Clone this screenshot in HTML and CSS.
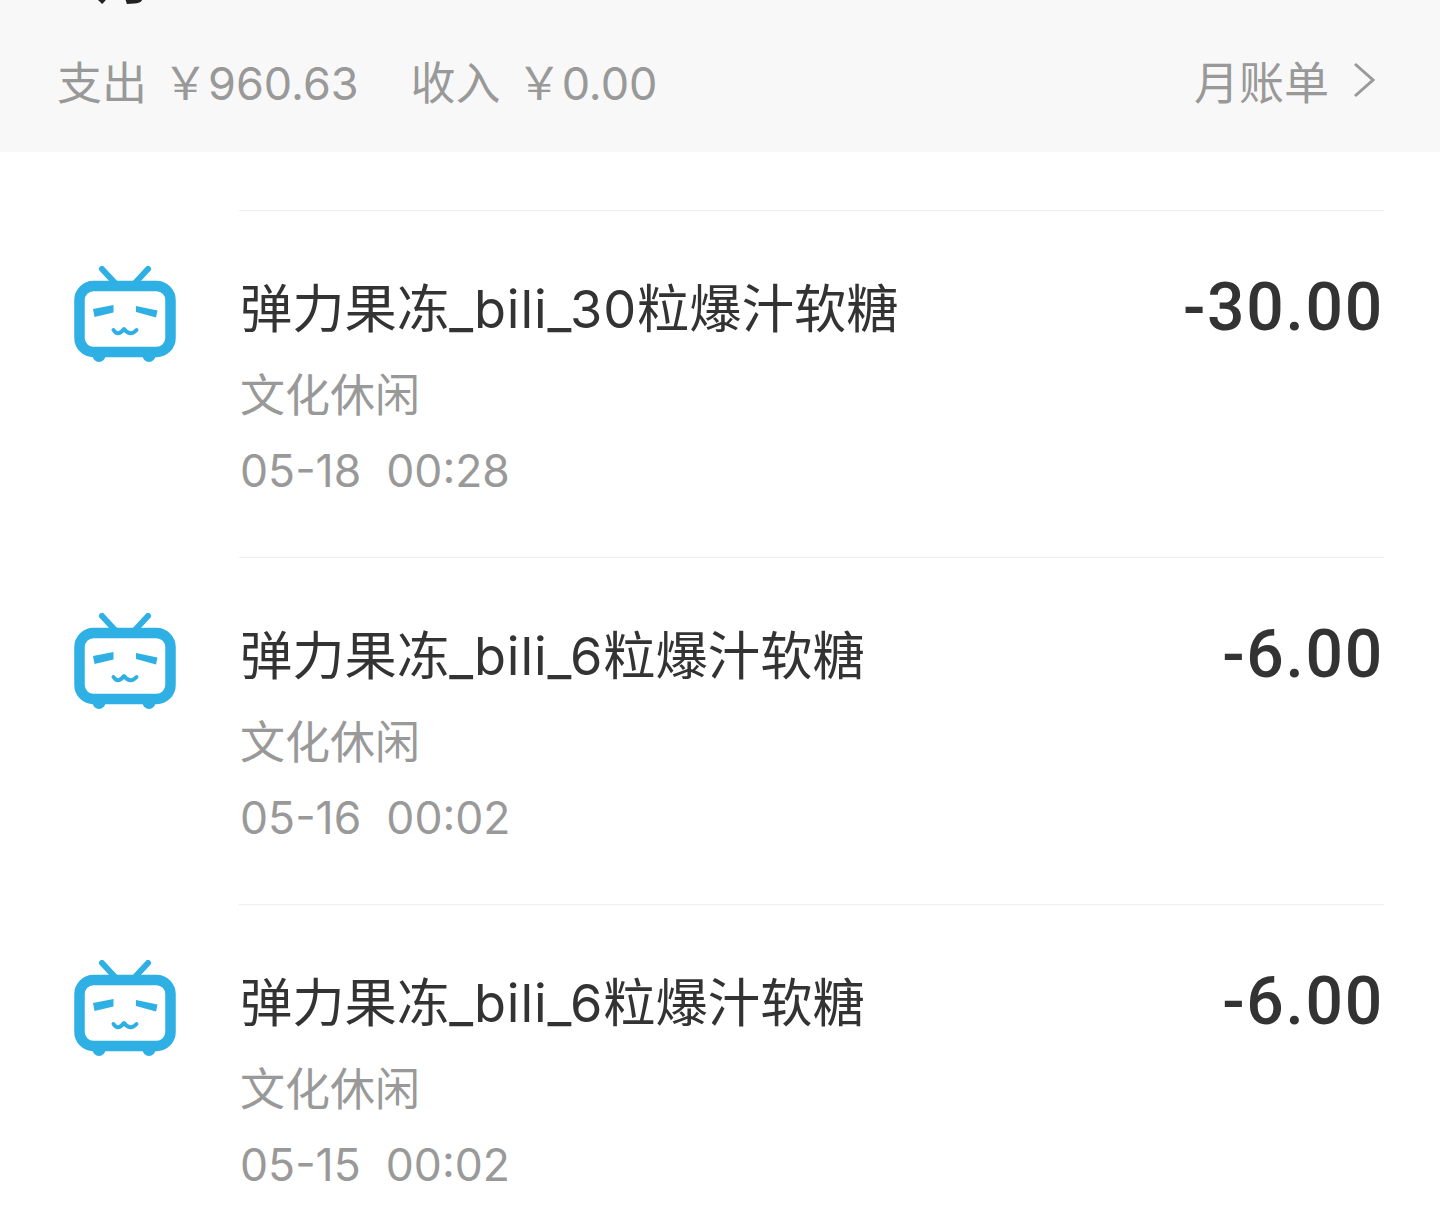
FILE: index.html
```html
<!DOCTYPE html>
<html lang="zh-CN">
<head>
<meta charset="UTF-8" />
<title>账单</title>
<link rel="stylesheet" href="styles.css">
</head>
<body>

<svg class="defs" width="0" height="0">
  <symbol id="tv" viewBox="0 0 102 96">
    <g fill="none" stroke="#2fb0e4" stroke-linecap="round" stroke-linejoin="round">
      <path d="M28 3 L41 17 M74 3 L61 17" stroke-width="6" />
      <rect x="5.5" y="20" width="91" height="66" rx="14" stroke-width="10.5" />
      <path d="M39.5 64 Q44 71 50 63 Q56 71 62.5 64" stroke-width="4" />
    </g>
    <path d="M19 43 L39.5 39 L39.5 46.5 L20.5 51 Z M62 40 L83.5 44.5 L82 51.5 L62 46 Z" fill="#2fb0e4" />
    <circle cx="25" cy="89.5" r="6.5" fill="#2fb0e4" />
    <circle cx="75" cy="89.5" r="6.5" fill="#2fb0e4" />
  </symbol>
</svg>

<header class="summary">
  <div class="month">5月</div>
  <div class="summary-row">
    <div class="totals">
      <span>支出</span><span class="money">￥960.63</span>
      <span class="income">收入</span><span class="money">￥0.00</span>
    </div>
    <a class="bill-link" href="#">月账单
      <svg class="chevron" viewBox="0 0 22 36" width="22" height="36"><path d="M2 2 L20 18 L2 34" fill="none" stroke="#999" stroke-width="3" /></svg>
    </a>
  </div>
</header>

<main class="list">
  <div class="row">
    <svg class="tv"><use href="#tv" /></svg>
    <div class="row-body">
      <div class="info">
        <div class="title">弹力果冻<span class="latin">_bili_30</span>粒爆汁软糖</div>
        <div class="category">文化休闲</div>
        <div class="time">05-18&nbsp; 00:28</div>
      </div>
      <div class="amount">-30.00</div>
    </div>
  </div>
  <div class="row">
    <svg class="tv"><use href="#tv" /></svg>
    <div class="row-body">
      <div class="info">
        <div class="title">弹力果冻<span class="latin">_bili_6</span>粒爆汁软糖</div>
        <div class="category">文化休闲</div>
        <div class="time">05-16&nbsp; 00:02</div>
      </div>
      <div class="amount">-6.00</div>
    </div>
  </div>
  <div class="row">
    <svg class="tv"><use href="#tv" /></svg>
    <div class="row-body">
      <div class="info">
        <div class="title">弹力果冻<span class="latin">_bili_6</span>粒爆汁软糖</div>
        <div class="category">文化休闲</div>
        <div class="time">05-15&nbsp; 00:02</div>
      </div>
      <div class="amount">-6.00</div>
    </div>
  </div>
</main>

</body>
</html>
```

FILE: styles.css
```css
html, body {
  margin: 0;
  height: 100%;
  overflow: hidden;
  background: #fff;
}
body {
  font-family: "Inter", "Noto Sans CJK SC", sans-serif;
  color: #333;
}
.defs {
  display: block;
  height: 0;
}
.summary {
  height: 152px;
  background: #f8f8f8;
  padding: 0 65px 0 57px;
  box-sizing: border-box;
  overflow: hidden;
}
.month {
  height: 56px;
  margin-top: -50px;
  padding-left: 3px;
  line-height: 56px;
  font-size: 56px;
  font-weight: 700;
  color: #222;
}
.summary-row {
  display: flex;
  justify-content: space-between;
  align-items: center;
  height: 56px;
  margin-top: 46px;
  font-size: 45px;
  font-weight: 400;
  color: #999;
}
.totals {
  display: flex;
  align-items: center;
}
.money {
  margin-left: 16px;
}
.income {
  margin-left: 52px;
}
.bill-link {
  display: flex;
  align-items: center;
  gap: 24px;
  color: #999;
  text-decoration: none;
}
.list {
  padding-top: 58px;
}
.row {
  display: flex;
  height: 347px;
  padding: 0 56px 0 74px;
  box-sizing: border-box;
}
.tv {
  width: 102px;
  height: 96px;
  flex: none;
  margin: 56px 63px 0 0;
}
.row-body {
  flex: 1;
  display: flex;
  justify-content: space-between;
  border-top: 1px solid #eee;
}
.info {
  padding: 62px 0 0 1px;
}
.title {
  font-size: 52.3px;
  line-height: 72px;
  font-weight: 400;
  color: #333;
}
.latin {
  letter-spacing: 0.9px;
}
.category {
  margin-top: 15px;
  font-size: 45px;
  line-height: 72px;
  font-weight: 400;
  color: #999;
}
.time {
  margin-top: 9px;
  font-size: 44.5px;
  line-height: 60px;
  font-weight: 400;
  color: #999;
}
.amount {
  margin: 61px 0 0 0;
  font-family: "Roboto", "Noto Sans CJK SC", sans-serif;
  font-size: 66px;
  line-height: 72px;
  font-weight: 500;
  letter-spacing: 1.7px;
  color: #333;
}
```
